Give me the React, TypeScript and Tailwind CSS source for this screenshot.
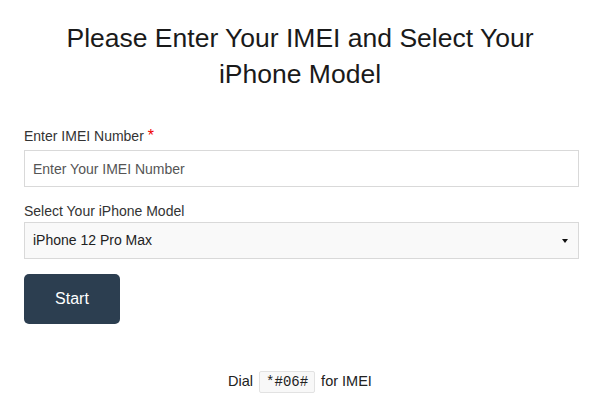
import React from "react";

export default function App() {
  return (
    <div className="w-[600px] h-[403px] bg-white font-['Liberation_Sans',Arial,sans-serif] text-[#333]">
      <div className="pt-[20px] text-center text-[26.5px] leading-[36px] text-[#1a1a1a]">
        <div>Please Enter Your IMEI and Select Your</div>
        <div>iPhone Model</div>
      </div>
      <div className="ml-6 w-[555px] pt-[35px]">
        <label className="block text-[14px] leading-[18px] mb-[5px]">
          Enter IMEI Number <span className="text-[#e00] text-[16px]">*</span>
        </label>
        <input
          className="block w-full h-[37px] border border-[#d9d9d9] bg-white px-[8px] text-[14px] text-[#555] placeholder:text-[#555] outline-none"
          placeholder="Enter Your IMEI Number"
        />
        <label className="block text-[14px] leading-[18px] mt-[15px] mb-[2px]">
          Select Your iPhone Model
        </label>
        <div className="relative h-[37px] w-full border border-[#d9d9d9] bg-[#f9f9f9] flex items-center px-[8px] text-[14px] text-[#222]">
          <span>iPhone 12 Pro Max</span>
          <span className="absolute right-[10px] top-[16px] w-0 h-0 border-l-[3px] border-r-[3px] border-t-[4px] border-l-transparent border-r-transparent border-t-[#111]" />
        </div>
        <button className="mt-[15px] w-[96px] h-[50px] rounded-[5px] bg-[#2c3e50] text-white text-[16px]">
          Start
        </button>
      </div>
      <div className="mt-[47px] flex justify-center items-center text-[14.5px] text-[#222]">
        <span>Dial</span>
        <code className="mx-[6px] px-[6px] py-[2px] border border-[#e2e2e2] bg-[#f8f8f8] rounded-[2px] font-['Liberation_Mono',monospace] text-[14px] leading-[16px] text-[#222]">
          *#06#
        </code>
        <span>for IMEI</span>
      </div>
    </div>
  );
}
